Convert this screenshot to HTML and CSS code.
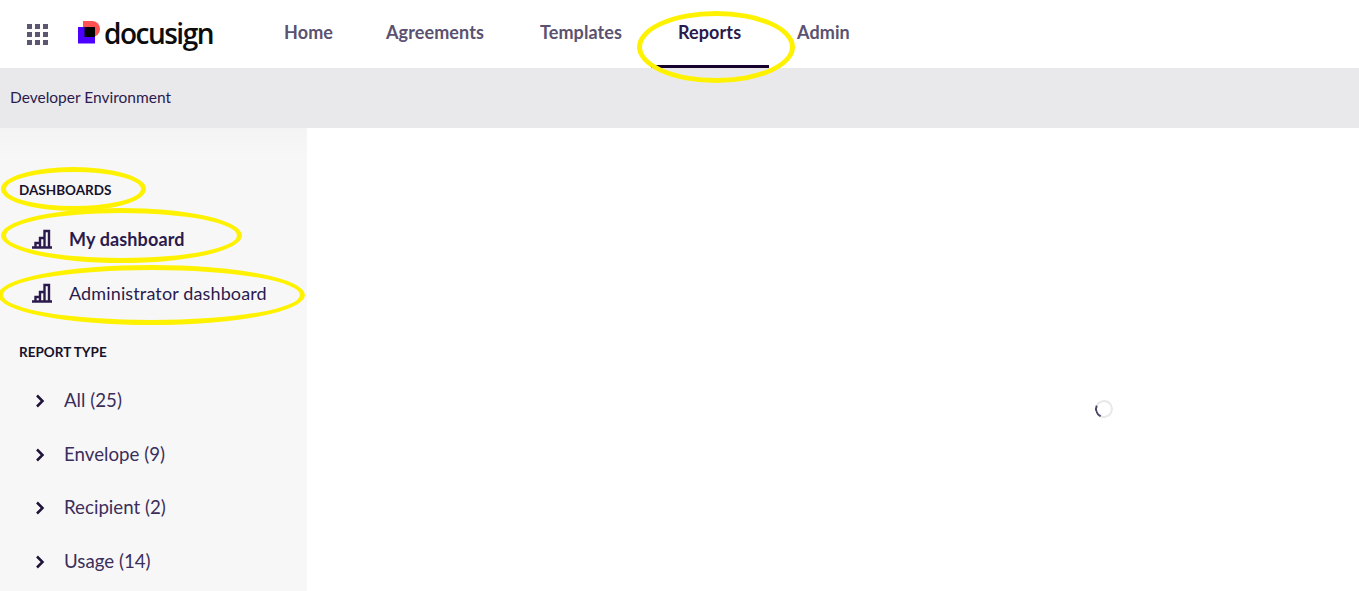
FILE: index.html
```html
<!DOCTYPE html>
<html lang="en">
<head>
    <meta charset="UTF-8">
    <meta name="viewport" content="width=device-width, initial-scale=1.0">
    <title>Docusign Reports</title>
    <link rel="stylesheet" href="styles.css">
</head>
<body>
    <header class="top-bar">
        <div class="apps-grid">
            <i></i><i></i><i></i><i></i><i></i><i></i><i></i><i></i><i></i>
        </div>
        <div class="logo">
            <svg class="logo-mark" width="22" height="23" viewBox="0 0 22 23">
                <path d="M5 0h9a8 8 0 0 1 0 16H5z" fill="#ff5252"/>
                <rect x="0" y="6" width="17" height="16.500" fill="#4c00ff"/>
                <path d="M6.500 6H17v10H6.500z" fill="#000"/>
            </svg>
            <span class="logo-txt">docusign</span>
        </div>
        <nav class="main-nav">
            <a class="nav-item nav-home">Home</a>
            <a class="nav-item nav-agreements">Agreements</a>
            <a class="nav-item nav-templates">Templates</a>
            <a class="nav-item nav-reports active">Reports</a>
            <a class="nav-item nav-admin">Admin</a>
        </nav>
    </header>
    <div class="env-bar">Developer Environment</div>
    <div class="container">
        <aside class="side-nav">
            <h3 class="side-title">DASHBOARDS</h3>
            <div class="dash-item bold">
                <svg class="dash-icon" width="22" height="20" viewBox="0 0 22 20"><path d="M1 18.500h20M4.500 18v-4h4.500v4M9 18V9h4.500v9M13.500 18V2H18v16" fill="none" stroke="#2b1b4d" stroke-width="2.400"/></svg>
                <span>My dashboard</span>
            </div>
            <div class="dash-item">
                <svg class="dash-icon" width="22" height="20" viewBox="0 0 22 20"><path d="M1 18.500h20M4.500 18v-4h4.500v4M9 18V9h4.500v9M13.500 18V2H18v16" fill="none" stroke="#2b1b4d" stroke-width="2.400"/></svg>
                <span>Administrator dashboard</span>
            </div>
            <h3 class="side-title report-title">REPORT TYPE</h3>
            <ul class="type-list">
                <li><svg width="10" height="14" viewBox="0 0 10 14"><path d="M2 1.500 7.500 7 2 12.500" fill="none" stroke="#1f1338" stroke-width="2.500"/></svg>All (25)</li>
                <li><svg width="10" height="14" viewBox="0 0 10 14"><path d="M2 1.500 7.500 7 2 12.500" fill="none" stroke="#1f1338" stroke-width="2.500"/></svg>Envelope (9)</li>
                <li><svg width="10" height="14" viewBox="0 0 10 14"><path d="M2 1.500 7.500 7 2 12.500" fill="none" stroke="#1f1338" stroke-width="2.500"/></svg>Recipient (2)</li>
                <li><svg width="10" height="14" viewBox="0 0 10 14"><path d="M2 1.500 7.500 7 2 12.500" fill="none" stroke="#1f1338" stroke-width="2.500"/></svg>Usage (14)</li>
            </ul>
        </aside>
        <main class="content">
            <div class="spinner"></div>
        </main>
    </div>
    <!-- yellow marks drawn on top of the screenshot -->
    <div class="mark mark-reports"></div>
    <div class="mark mark-dashboards"></div>
    <div class="mark mark-my"></div>
    <div class="mark mark-admin"></div>
</body>
</html>
```

FILE: styles.css
```css
*{margin: 0;padding: 0;box-sizing: border-box}
ul,li{list-style: none;}
a{text-decoration: none;color:inherit}
html,body{height: 100%;overflow: hidden;}
body{font-family: "Lato", "Noto Sans", sans-serif;color: #2b1b4d;background: #fff;}

.top-bar{display: flex;align-items: center;height: 68px;padding-left: 27px;background: #fff;}
.apps-grid{display: grid;grid-template-columns: repeat(3, 5px);grid-auto-rows: 5px;gap: 3px;width: 21px;}
.apps-grid i{background: #5d5671;}
.logo{display: flex;align-items: center;margin-left: 30px;width: 134px;}
.logo-mark{flex: none;margin-top: -3px;}
.logo-txt{margin-left: 4px;font-family: "Open Sans", sans-serif;font-size: 28px;font-weight: 600;letter-spacing: -1.500px;color: #0d0d0d;line-height: 36px;margin-top: -2px;}
.main-nav{display: flex;height: 68px;margin-left: 72px;}
.nav-item{display: block;height: 68px;padding-top: 21px;font-size: 18px;line-height: 22px;font-weight: 700;letter-spacing: .1px;color: #5a5270;}
.nav-home{width: 102px;}
.nav-agreements{width: 154px;}
.nav-templates{width: 111px;}
.nav-reports{width: 118px;padding-left: 27px;}
.nav-admin{padding-left: 28px;}
.nav-item.active{color: #2b1b4d;border-bottom: 3px solid #17022e;}

.env-bar{height: 60px;padding-left: 10px;background: #e9e9ec;font-size: 15.500px;line-height: 58px;color: #2b1b4d;}

.container{display: flex;height: 463px;}
.side-nav{width: 307px;padding-top: 53px;padding-left: 1px;background: linear-gradient(#f4f4f5, #f7f7f8 30px);}
.side-title{padding-left: 18px;font-size: 13.500px;line-height: 18px;font-weight: 700;color: #17122b;}
.dash-item{display: flex;align-items: center;height: 54px;padding-left: 30px;font-size: 18px;letter-spacing: .13px;}
.dash-item span{margin-left: 16px;}
.dash-icon{flex: none;}
.dash-item.bold{margin-top: 13px;font-weight: 700;}
.report-title{margin-top: 23px;}
.type-list{margin-top: 13px;}
.type-list li{display: flex;align-items: center;height: 53.700px;padding-left: 34px;padding-bottom: 2px;font-size: 18.700px;color: #3b2e5a;}
.type-list svg{flex: none;margin-right: 19px;margin-top: 2px;}

.content{flex: 1;display: flex;}
.spinner{width: 18px;height: 18px;margin: 272px 0 0 788px;border: 2px solid #e8e8ea;border-left-color: #4a4468;border-radius: 50%;transform: rotate(-20deg);}

.mark{position: absolute;border: 5px solid #fff200;border-radius: 50%;}
.mark-reports{left: 637px;top: 11px;width: 158px;height: 72px;}
.mark-dashboards{left: 1px;top: 167px;width: 145px;height: 44px;}
.mark-my{left: 1px;top: 208px;width: 241px;height: 55px;}
.mark-admin{left: -2px;top: 265px;width: 307px;height: 60px;}
```
